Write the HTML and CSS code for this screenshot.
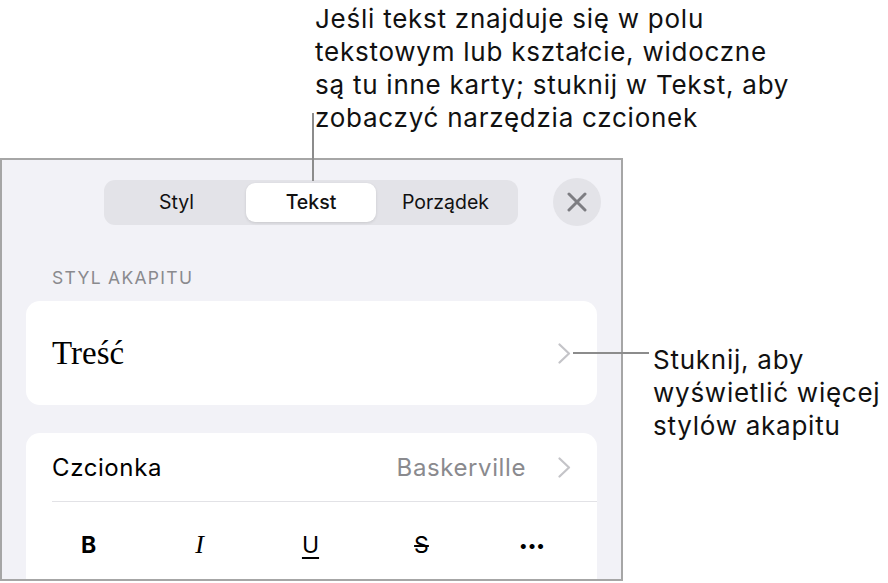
FILE: index.html
```html
<!DOCTYPE html>
<html lang="pl">
<head>
<meta charset="utf-8">
<title>Tekst</title>
<link rel="stylesheet" href="styles.css">
</head>
<body>
<div class="page">
  <p class="note note-top">Jeśli tekst znajduje się w polu<br>tekstowym lub kształcie, widoczne<br>są tu inne karty; stuknij w Tekst, aby<br>zobaczyć narzędzia czcionek</p>
  <div class="row">
    <div class="panel">
      <div class="header">
        <div class="segmented">
          <div class="seg">Styl</div>
          <div class="seg seg-active">Tekst</div>
          <div class="seg">Porządek</div>
        </div>
        <div class="close">
          <svg width="20" height="20" viewBox="0 0 20 20"><path d="M2 2 L18 18 M18 2 L2 18" stroke="#7d7d82" stroke-width="3" stroke-linecap="round" fill="none"/></svg>
        </div>
      </div>
      <div class="section-label">STYL AKAPITU</div>
      <div class="card card-style">
        <span class="style-name">Treść</span>
        <svg class="chev" width="13" height="21" viewBox="0 0 13 21"><path d="M1.5 1.5 L11 10.5 L1.5 19.5" stroke="#c4c4c8" stroke-width="2.2" fill="none" stroke-linecap="round" stroke-linejoin="round"/></svg>
      </div>
      <div class="card card-font">
        <div class="font-row">
          <span class="font-label">Czcionka</span>
          <span class="font-value">Baskerville</span>
          <svg class="chev" width="13" height="21" viewBox="0 0 13 21"><path d="M1.5 1.5 L11 10.5 L1.5 19.5" stroke="#c4c4c8" stroke-width="2.2" fill="none" stroke-linecap="round" stroke-linejoin="round"/></svg>
        </div>
        <div class="format-row">
          <span class="fmt fmt-b">B</span>
          <span class="fmt fmt-i">I</span>
          <span class="fmt fmt-u">U</span>
          <span class="fmt fmt-s">S</span>
          <span class="fmt fmt-more">•••</span>
        </div>
      </div>
    </div>
    <p class="note note-side">Stuknij, aby<br>wyświetlić więcej<br>stylów akapitu</p>
  </div>
  <div class="leader leader-v"></div>
  <div class="leader leader-h"></div>
</div>
</body>
</html>
```
FILE: styles.css
```css
* { box-sizing: border-box; }
html, body { margin: 0; padding: 0; background: #ffffff; }
body { font-family: "Inter", "Roboto", "Noto Sans", sans-serif; color: #000; }

.page {
  position: relative;
  width: 888px;
  height: 583px;
  overflow: hidden;
}

.note {
  margin: 0;
  font-size: 26px;
  line-height: 33px;
  color: #111;
  letter-spacing: 0.75px;
  white-space: nowrap;
}
.note-top {
  padding: 2px 0 0 315px;
  height: 158px;
}

.row {
  display: flex;
  align-items: flex-start;
}

.panel {
  width: 623px;
  height: 423px;
  flex: none;
  border: 2px solid #a6a6a6;
  background: #f2f2f7;
  overflow: hidden;
}

.header {
  display: flex;
  align-items: center;
  padding: 18px 0 0 102px;
}
.segmented {
  display: grid;
  grid-template-columns: 139px 130px 139px;
  width: 414px;
  height: 45px;
  padding: 3px;
  background: #e3e3e8;
  border-radius: 11px;
}
.seg {
  display: flex;
  align-items: center;
  justify-content: center;
  font-size: 19.5px;
  font-weight: 400;
  color: #111;
}
.seg-active {
  background: #fff;
  border-radius: 9px;
  font-weight: 500;
  box-shadow: 0 1px 3px rgba(0,0,0,0.12);
}
.close {
  margin-left: 35px;
  width: 48px;
  height: 48px;
  border-radius: 50%;
  background: #e3e3e8;
  display: flex;
  align-items: center;
  justify-content: center;
}

.section-label {
  margin: 42px 0 0 50px;
  font-size: 17.5px;
  line-height: 20px;
  letter-spacing: 1.3px;
  color: #8a8a8e;
}

.card {
  margin-left: 24px;
  width: 571px;
  background: #fff;
  border-radius: 14px;
}
.card-style {
  margin-top: 13px;
  height: 104px;
  display: flex;
  align-items: center;
  padding: 0 26px 0 26px;
}
.style-name {
  flex: 1;
  font-family: "Liberation Serif", "DejaVu Serif", serif;
  font-size: 33px;
  color: #000;
}
.chev { flex: none; }

.card-font {
  margin-top: 28px;
  height: 200px;
}
.font-row {
  display: flex;
  align-items: center;
  height: 69px;
  margin-left: 26px;
  padding-right: 26px;
  border-bottom: 1px solid #e2e2e6;
}
.font-label {
  flex: 1;
  font-size: 24px;
  letter-spacing: 0.6px;
}
.font-value {
  font-size: 24px;
  letter-spacing: 0.6px;
  color: #8a8a8e;
  margin-right: 32px;
}

.format-row {
  display: grid;
  grid-template-columns: repeat(5, 111px);
  padding-left: 7px;
  height: 86px;
  align-items: center;
}
.fmt {
  text-align: center;
  font-size: 23px;
  color: #000;
}
.fmt-b { font-weight: 700; }
.fmt-i {
  font-family: "Liberation Serif", "DejaVu Serif", serif;
  font-style: italic;
  font-size: 26px;
}
.fmt-u { text-decoration: underline; text-underline-offset: 4px; text-decoration-thickness: 1.5px; }
.fmt-s { text-decoration: line-through; text-decoration-thickness: 1.5px; }
.fmt-more { font-size: 16px; letter-spacing: 1px; font-weight: 700; }

.note-side {
  margin: 185px 0 0 30px;
}

.leader {
  position: absolute;
  background: #8c8c8c;
}
.leader-v {
  left: 312px;
  top: 113px;
  width: 2px;
  height: 68px;
}
.leader-h {
  left: 573px;
  top: 352px;
  width: 76px;
  height: 2px;
}
```
